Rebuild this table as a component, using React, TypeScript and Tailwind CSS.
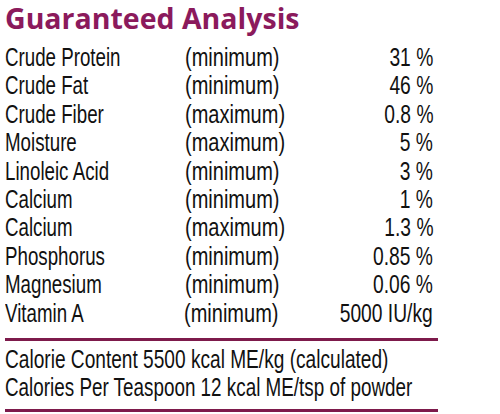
import React from "react";

const rows: [string, string, string][] = [
  ["Crude Protein", "(minimum)", "31 %"],
  ["Crude Fat", "(minimum)", "46 %"],
  ["Crude Fiber", "(maximum)", "0.8 %"],
  ["Moisture", "(maximum)", "5 %"],
  ["Linoleic Acid", "(minimum)", "3 %"],
  ["Calcium", "(minimum)", "1 %"],
  ["Calcium", "(maximum)", "1.3 %"],
  ["Phosphorus", "(minimum)", "0.85 %"],
  ["Magnesium", "(minimum)", "0.06 %"],
  ["Vitamin A", "(minimum)", "5000 IU/kg"],
];

function L({ children }: { children: React.ReactNode }) {
  return (
    <span className="inline-block origin-left scale-x-[0.72] whitespace-nowrap">{children}</span>
  );
}
function R({ children }: { children: React.ReactNode }) {
  return (
    <span className="inline-block origin-right scale-x-[0.74] whitespace-nowrap">{children}</span>
  );
}

export default function App() {
  return (
    <div
      className="w-[500px] h-[414px] bg-white overflow-hidden text-[#111111]"
      style={{ fontFamily: '"Liberation Sans", Arial, sans-serif' }}
    >
      <div className="w-[438px] pl-[5px]">
        <div
          className="h-[43px] pt-[2px] text-[28.5px] leading-[33px] font-bold text-[#8b1a5c] whitespace-nowrap"
          style={{ fontFamily: '"Open Sans", "Liberation Sans", sans-serif' }}
        >
          Guaranteed Analysis
        </div>
        <div className="flex flex-col text-[26px] leading-[28.4px]">
          {rows.map(([a, b, c], i) => (
            <div key={i} className="flex h-[28.4px]">
              <div className="w-[180px]">
                <L>{a}</L>
              </div>
              <div className="flex-1">
                <span className="inline-block origin-left scale-x-[0.77] whitespace-nowrap">{b}</span>
              </div>
              <div className="pr-[5px] text-right">
                <R>{c}</R>
              </div>
            </div>
          ))}
        </div>
        <div className="mt-[11px] h-[3px] bg-[#7d1a4b]" />
        <div className="pt-[4px] text-[26px] leading-[28px]">
          <div className="h-[28px]">
            <span className="inline-block origin-left scale-x-[0.735] whitespace-nowrap">
              Calorie Content 5500 kcal ME/kg (calculated)
            </span>
          </div>
          <div className="h-[28px]">
            <span className="inline-block origin-left scale-x-[0.725] whitespace-nowrap">
              Calories Per Teaspoon 12 kcal ME/tsp of powder
            </span>
          </div>
        </div>
        <div className="mt-[8px] h-[3px] bg-[#7d1a4b]" />
      </div>
    </div>
  );
}
